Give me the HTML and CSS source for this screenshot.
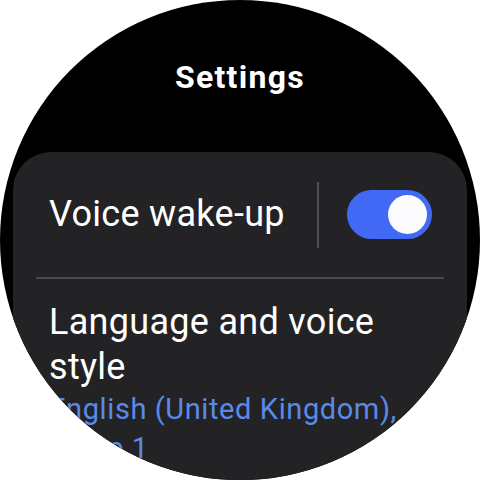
FILE: index.html
```html
<!DOCTYPE html>
<html lang="en">
<head>
<meta charset="utf-8">
<title>Settings</title>
<link rel="stylesheet" href="styles.css">
</head>
<body>
<div class="watch">
  <h1 class="title">Settings</h1>
  <div class="card">
    <div class="row toggle-row">
      <span class="label">Voice wake-up</span>
      <span class="vdivider"></span>
      <span class="toggle"><span class="knob"></span></span>
    </div>
    <div class="hdivider"></div>
    <div class="row text-row">
      <div class="label multi">Language and voice style</div>
      <div class="sub">English (United Kingdom), Voice 1</div>
    </div>
  </div>
</div>
</body>
</html>
```
FILE: styles.css
```css
html, body {
  margin: 0;
  padding: 0;
  background: #ffffff;
}
body {
  font-family: Roboto, "Noto Sans", sans-serif;
}
.watch {
  width: 480px;
  height: 480px;
  border-radius: 50%;
  overflow: hidden;
  background: #000000;
  display: flex;
  flex-direction: column;
  padding-top: 57px;
  box-sizing: border-box;
}
.title {
  margin: 0;
  height: 40px;
  line-height: 40px;
  font-size: 32px;
  font-weight: 700;
  color: #ffffff;
  text-align: center;
  letter-spacing: 1.3px;
}
.card {
  margin: 55px 13px 0 13px;
  background: #232326;
  border-radius: 38px;
  flex: 1 0 auto;
}
.toggle-row {
  height: 125px;
  display: flex;
  align-items: center;
  padding: 0 35px 0 36px;
}
.label {
  font-size: 36px;
  color: #ffffff;
  line-height: 45px;
  font-weight: 400;
  letter-spacing: 0.3px;
}
.toggle-row .label {
  flex: 1;
}
.vdivider {
  width: 2px;
  height: 66px;
  background: #505054;
  margin-right: 28px;
}
.toggle {
  width: 85px;
  height: 49px;
  border-radius: 25px;
  background: #4169f5;
  display: flex;
  align-items: center;
  justify-content: flex-end;
  padding-right: 5px;
  box-sizing: border-box;
}
.knob {
  width: 39px;
  height: 39px;
  border-radius: 50%;
  background: #fcfcff;
}
.hdivider {
  height: 2px;
  margin: 0 23px;
  background: #4a4a4e;
}
.text-row {
  padding: 21px 36px 0 36px;
}
.sub {
  font-size: 29px;
  line-height: 39px;
  color: #5a8ae8;
  letter-spacing: 0.6px;
}
```
